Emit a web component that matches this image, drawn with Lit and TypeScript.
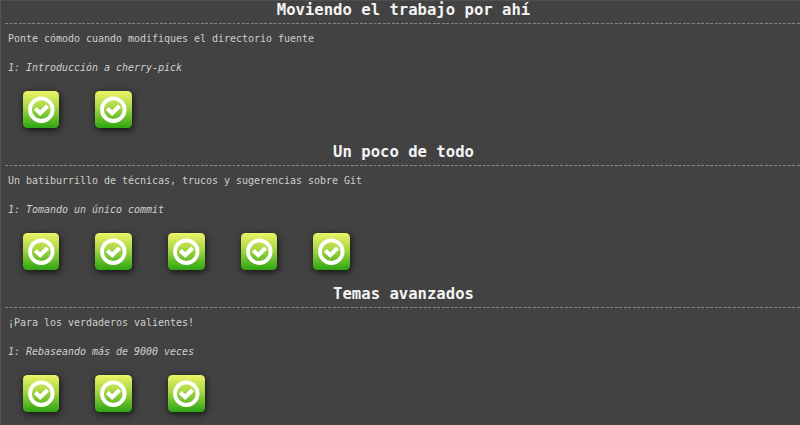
import { LitElement, html, css } from "lit";
import { customElement } from "lit/decorators.js";

interface Sequence { title: string; about: string; first: string; levels: number; }

const sequences: Sequence[] = [
  { title: "Moviendo el trabajo por ahí", about: "Ponte cómodo cuando modifiques el directorio fuente", first: "1: Introducción a cherry-pick", levels: 2 },
  { title: "Un poco de todo", about: "Un batiburrillo de técnicas, trucos y sugerencias sobre Git", first: "1: Tomando un único commit", levels: 5 },
  { title: "Temas avanzados", about: "¡Para los verdaderos valientes!", first: "1: Rebaseando más de 9000 veces", levels: 3 },
];

@customElement("level-icon")
class LevelIcon extends LitElement {
  static styles = css`
    :host { display: block; width: 36.6px; height: 37.4px; border-radius: 4.5px; flex: none;
      background: linear-gradient(#edf468, #a6d644 45%, #2ea512); box-shadow: 1px 2px 7px rgba(0,0,0,.75); }
    svg { display: block; width: 36.6px; height: 37.4px; }
  `;
  render() {
    return html`<svg viewBox="0 0 36.6 37.4" fill="none" stroke="#fff">
      <circle cx="18.3" cy="18.7" r="11.3" stroke-width="3.8"/>
      <path d="M12.3 17.5l4.9 4.6 7.4-7" stroke-width="4.1"/>
    </svg>`;
  }
}

@customElement("app-root")
class AppRoot extends LitElement {
  static styles = css`
    :host { display: block; box-sizing: border-box; width: 800px; height: 425px; overflow: hidden;
      background: #424242; border-left: 1px solid #555; color: #cfcfcf; box-shadow: inset 0 1px #505050;
      font-family: "DejaVu Sans Mono", monospace; }
    section { height: 142px; padding-left: 4px; }
    h2 { margin: 0; height: 24px; line-height: 21px; font-size: 15.6px; text-indent: 2px; text-align: center; color: #f4f4f4;
      background: repeating-linear-gradient(90deg, #858585 0 2.9px, #4a4a4a 2.9px 4.55px) 0 100% / 100% 1px no-repeat; }
    p { margin: 0 0 0 3px; font-size: 10px; letter-spacing: -0.02px; line-height: 29px; height: 29px; }
    .first { font-style: italic; }
    .levels { display: flex; gap: 36.1px; padding: 9px 0 0 17.7px; }
  `;
  render() {
    return sequences.map(s => html`<section>
      <h2>${s.title}</h2><p>${s.about}</p><p class="first">${s.first}</p>
      <div class="levels">${Array.from({ length: s.levels }, () => html`<level-icon></level-icon>`)}</div>
    </section>`);
  }
}
